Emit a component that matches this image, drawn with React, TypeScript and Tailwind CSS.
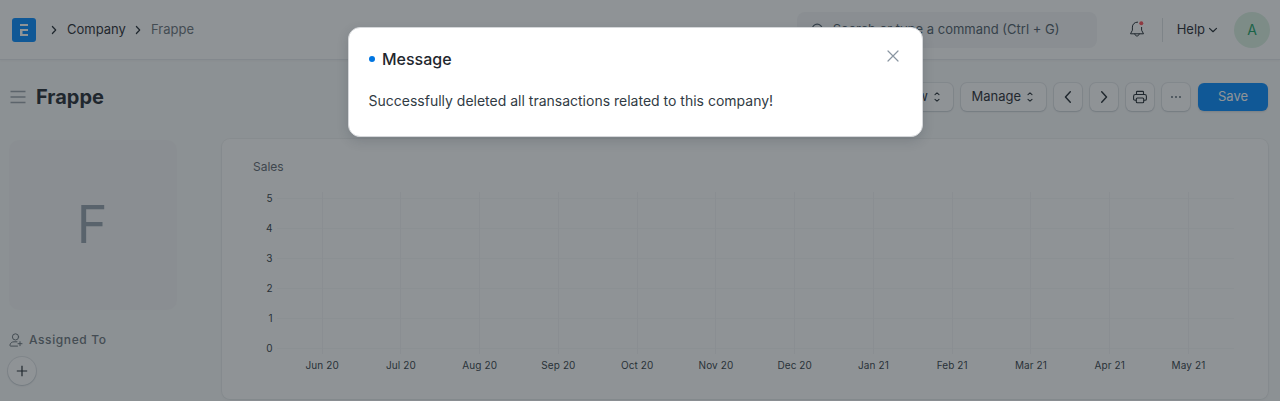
import React from "react";

const MONTHS = ["Jun 20", "Jul 20", "Aug 20", "Sep 20", "Oct 20", "Nov 20", "Dec 20", "Jan 21", "Feb 21", "Mar 21", "Apr 21", "May 21"];
const TICKS = [5, 4, 3, 2, 1, 0];

function Chevron({ d, w = 1.2, size = 10 }: { d: string; w?: number; size?: number }) {
  return (
    <svg width={size} height={size} viewBox="0 0 10 10" fill="none" stroke="#1f272e" strokeWidth={w} strokeLinecap="round" strokeLinejoin="round" className="shrink-0">
      <path d={d} />
    </svg>
  );
}

function SelectArrows() {
  return (
    <svg width="8" height="12" viewBox="0 0 8 12" fill="none" stroke="#1f272e" strokeWidth="1.1" strokeLinecap="round" strokeLinejoin="round" className="shrink-0">
      <path d="M2 3.7 4 1.900l2 1.800M2 8.300l2 1.800 2-1.800" />
    </svg>
  );
}

const BUTTON = "flex h-7 items-center rounded-md bg-white shadow-[0_0_0_1px_rgba(17,43,66,0.08),0_1px_2px_rgba(17,43,66,0.14)]";

function Navbar() {
  return (
    <header className="flex h-[60px] shrink-0 items-center justify-between border-b border-[#e6e9ec] bg-white pr-2.5 pl-3 shadow-[0_1px_2px_rgba(25,39,52,0.04)]">
      <div className="flex items-center text-[13px]">
        <svg width="24" height="24" viewBox="0 0 24 24">
          <rect width="24" height="24" rx="3" fill="#0089ff" />
          <path d="M8 6h8v2H8zM8 11h8v2h-5.500v3H16v2H8z" fill="#fff" />
        </svg>
        <span className="ml-[13px] flex"><Chevron d="m3.400 1.500 3.300 3.500-3.300 3.500" /></span>
        <span className="ml-2 w-[58px]">Company</span>
        <span className="ml-2 flex"><Chevron d="m3.400 1.500 3.300 3.500-3.300 3.500" /></span>
        <span className="ml-2 text-[#687178]">Frappe</span>
      </div>
      <div className="flex items-center">
        <div className="flex h-9 w-[300px] items-center rounded-lg bg-[#f4f5f6] pl-3.5 text-[13px] text-[#4c5a67]">
          <svg width="14" height="14" viewBox="0 0 14 14" fill="none" stroke="#4c5a67" strokeWidth="1.2" strokeLinecap="round">
            <circle cx="6.200" cy="6.200" r="5" />
            <path d="m10 10 2.700 2.700" />
          </svg>
          <span className="ml-2">Search or type a command (Ctrl + G)</span>
        </div>
        <svg className="mb-px ml-8" width="16" height="18" viewBox="0 0 16 18" fill="none" stroke="#1f272e" strokeLinecap="round" strokeLinejoin="round">
          <path d="M8.600 2.100C5.600 2 3.400 4.300 3.400 7.100v3.100L1.500 13.800h13l-1.900-3.600V7.400M5.800 14c.3 1.300 1.100 2 2.200 2s1.900-.7 2.200-2" />
          <circle cx="12.300" cy="3.200" r="2" fill="#ff4d55" stroke="none" />
        </svg>
        <span className="ml-[17px] h-6 w-px bg-[#dce0e3]" />
        <span className="ml-3.5 text-[13px]">Help</span>
        <span className="mt-px ml-[3px] flex"><Chevron d="m1.500 3.400 3.500 3.300 3.500-3.300" /></span>
        <span className="ml-4 flex h-9 w-9 items-center justify-center rounded-full bg-[#daf0e1] text-[14px] text-[#16a163]">A</span>
      </div>
    </header>
  );
}

function PageHead() {
  return (
    <div className="flex h-[74px] shrink-0 items-center justify-between pr-3 pl-2.5">
      <div className="flex items-center">
        <svg width="16" height="14" viewBox="0 0 16 14" fill="none" stroke="#98a1a9" strokeWidth="1.500">
          <path d="M.5 1.500h15M.5 7h15M.5 12.500h15" />
        </svg>
        <h1 className="ml-2.5 text-[20px] font-bold">Frappe</h1>
      </div>
      <div className="flex items-center text-[13px]">
        <button className={`${BUTTON} w-[76px] justify-end gap-[5px] pr-3`}>View <SelectArrows /></button>
        <button className={`${BUTTON} ml-2 w-[85px] justify-end gap-[5px] pr-3`}>Manage <SelectArrows /></button>
        <button className={`${BUTTON} ml-2 w-7 justify-center`}><Chevron d="M6.900.700 2.900 5l4 4.300" size={12} /></button>
        <button className={`${BUTTON} ml-2 w-7 justify-center`}><Chevron d="m3.100.700 4 4.300-4 4.300" size={12} /></button>
        <button className={`${BUTTON} ml-2 w-7 justify-center`}>
          <svg width="14" height="14" viewBox="0 0 14 14" fill="none" stroke="#1f272e" strokeWidth="1.100" strokeLinejoin="round">
            <path d="M3.500 4.500V2.200c0-.5.300-.8.800-.8h5.400c.5 0 .8.300.8.800v2.300M3.300 10.300H2c-.8 0-1.400-.5-1.400-1.300V6.300c0-1 .8-1.800 1.800-1.800h9.200c1 0 1.800.8 1.800 1.800V9c0 .8-.6 1.300-1.400 1.300h-1.300" />
            <rect x="3.300" y="8" width="7.400" height="4.700" rx="1" />
          </svg>
        </button>
        <button className={`${BUTTON} ml-2 w-7 justify-center`}>
          <svg width="12" height="4" viewBox="0 0 12 4" fill="#4c5a67">
            <circle cx="2" cy="2" r=".9" /><circle cx="6" cy="2" r=".9" /><circle cx="10" cy="2" r=".9" />
          </svg>
        </button>
        <button className="ml-2 h-7 w-[70px] rounded-md bg-[#0089ff] text-white shadow-[0_1px_2px_rgba(17,43,66,0.15)]">Save</button>
      </div>
    </div>
  );
}

function Sidebar() {
  return (
    <aside className="flex w-[222px] shrink-0 flex-col">
      <div className="mt-1.5 ml-[9px] flex h-[170px] w-[168px] items-center justify-center rounded-[10px] bg-[#f4f5f6] pr-0.5 text-[52px] text-[#929eab]">F</div>
      <div className="mt-[22px] ml-[9px] flex h-4 items-center text-[12px] font-medium tracking-[0.05em] text-[#687178]">
        <svg width="14" height="14" viewBox="0 0 14 14" fill="none" stroke="#687178" strokeLinecap="round" strokeLinejoin="round">
          <circle cx="6.500" cy="3.900" r="3.100" />
          <path d="M8 8.800H5c-2.200 0-3.700 1.300-4.100 3.300-.1.600.2 1 .8 1h6.800M11 8.700v4M9 10.700h4" />
        </svg>
        <span className="ml-1.5">Assigned To</span>
      </div>
      <button className="mt-[9px] ml-2 flex h-7 w-7 items-center justify-center rounded-full bg-white shadow-[0_0_0_1px_rgba(17,43,66,0.1),0_1px_2px_rgba(17,43,66,0.14)]">
        <svg width="12" height="12" viewBox="0 0 12 12" stroke="#1f272e" strokeWidth="1.200"><path d="M6 .8v10.400M.8 6h10.400" /></svg>
      </button>
    </aside>
  );
}

function SalesChart() {
  return (
    <section className="mt-[5px] mr-3 h-[260px] flex-1 rounded-lg bg-white shadow-[0_0_0_1px_rgba(25,39,52,0.04),0_1px_3px_rgba(25,39,52,0.06)]">
      <svg width="1046" height="260" viewBox="222 139 1046 260" fontFamily="Inter, sans-serif">
        <text x="253" y="171" fontSize="12" fill="#5c656d">Sales</text>
        {TICKS.map((t, i) => (
          <g key={t}>
            <path d={`M277 ${198.500 + i * 30}H1234`} stroke="#f7f8f9" />
            <text x="272.500" y={202.300 + i * 30} textAnchor="end" fontSize="10" fill="#313b44">{t}</text>
          </g>
        ))}
        {MONTHS.map((m, i) => (
          <g key={m}>
            <path d={`M${Math.floor(322 + i * 78.750) + 0.500} 192V354`} stroke="#f4f5f6" />
            <text x={322.200 + i * 78.750} y="369" textAnchor="middle" fontSize="10" letterSpacing=".1" fill="#313b44">{m}</text>
          </g>
        ))}
      </svg>
    </section>
  );
}

function MessageDialog() {
  return (
    <div className="absolute inset-0 flex items-start bg-[#1f272e]/50 pt-[27px] pl-[348px]">
      <div role="dialog" className="h-[110px] w-[575px] rounded-xl border border-[#d5d7da] bg-white px-5 pt-[19px] shadow-[0_4px_12px_rgba(25,39,52,0.16)]">
        <div className="flex h-6 items-center justify-between">
          <div className="flex items-center">
            <span className="h-1.5 w-1.5 rounded-full bg-[#0075e1]" />
            <h2 className="ml-[7px] text-[16px] font-medium">Message</h2>
          </div>
          <svg className="mr-[3px] mb-[7px]" width="12" height="12" viewBox="0 0 12 12" stroke="#8995a1" strokeWidth="1.200" strokeLinecap="round">
            <path d="m1 1 10 10M11 1 1 11" />
          </svg>
        </div>
        <p className="mt-[19px] -ml-[0.5px] text-[14px] leading-[21px] text-[#313b44]">Successfully deleted all transactions related to this company!</p>
      </div>
    </div>
  );
}

export default function App() {
  return (
    <div className="relative flex h-[401px] w-[1280px] flex-col overflow-hidden bg-[#f9fafa] font-['Inter',sans-serif] text-[#1f272e]">
      <Navbar />
      <PageHead />
      <main className="flex">
        <Sidebar />
        <SalesChart />
      </main>
      <MessageDialog />
    </div>
  );
}
